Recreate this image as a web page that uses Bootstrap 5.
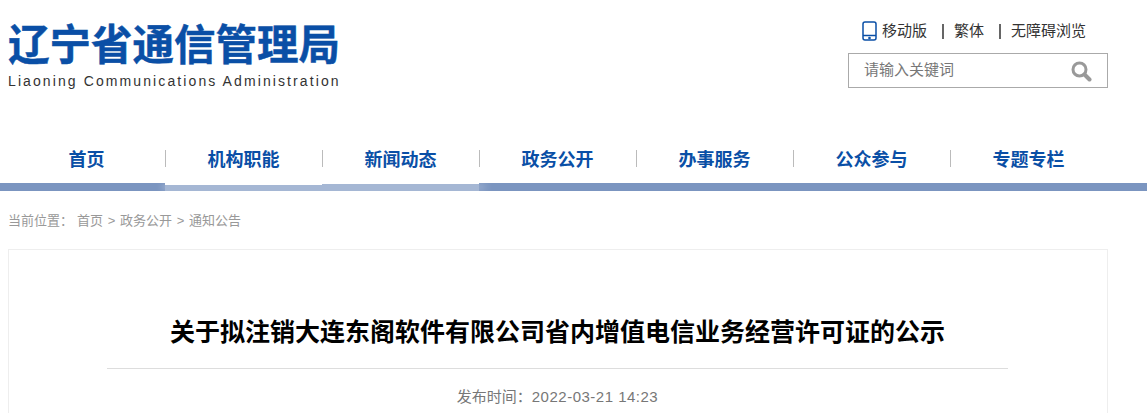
<!DOCTYPE html>
<html lang="zh-CN">
<head>
    <meta charset="UTF-8">
    <title>辽宁省通信管理局</title>
    <link href="https://cdn.jsdelivr.net/npm/bootstrap@5.3.0/dist/css/bootstrap.min.css" rel="stylesheet">
    <style>
        body {
            font-family: "Liberation Sans", "Noto Sans CJK SC", sans-serif;
            background: #fff;
            height: 414px;
            overflow: hidden;
        }
        .site-wrap { width: 1100px; margin-left: 8px; }
        .site-head { height: 130px; padding-top: 21px; }
        .logo-cn {
            font-size: 41.5px;
            line-height: 50px;
            font-weight: 700;
            color: #0a4fa6;
            -webkit-text-stroke: .5px #0a4fa6;
            white-space: nowrap;
        }
        .logo-en {
            font-size: 14px;
            line-height: 18px;
            letter-spacing: 2.1px;
            color: #333;
            margin-top: 1px;
            white-space: nowrap;
        }
        .head-tools { width: 260px; }
        .tool-links { font-size: 15px; line-height: 20px; color: #333; padding-left: 14px; }
        .tool-sep { width: 2px; height: 15px; background: #666; margin: 0 10px 0 15px; }
        .search-box {
            height: 35px;
            border: 1px solid #aaa;
            margin-top: 12px;
            padding: 0 15px;
            font-size: 15px;
            color: #777;
        }
        .nav-strip { border-bottom: 8px solid #7b95c0; height: 61px; }
        .nav-cell {
            width: 157px;
            height: 53px;
            font-size: 18px;
            font-weight: 700;
            color: #0a4fa6;
            line-height: 60px;
            text-align: center;
            position: relative;
        }
        .nav-cell + .nav-cell::before {
            content: "";
            position: absolute;
            left: 0;
            top: 20px;
            height: 17px;
            border-left: 1px solid #bbb;
        }
        .nav-hover::after {
            content: "";
            position: absolute;
            left: 0;
            right: 0;
            top: 53px;
            height: 8px;
            background: rgba(255, 255, 255, .32);
        }
        .nav-hover-a::after {
            border-top: 2px solid #fff;
            box-shadow: -5px 0 6px -2px rgba(255, 255, 255, .4);
        }
        .nav-hover-b::after {
            border-top: 1px solid #fff;
            box-shadow: 8px 0 8px -2px rgba(255, 255, 255, .45);
        }
        .crumb-row { font-size: 13px; line-height: 18px; color: #999; margin-top: 21px; }
        .crumb-home { margin-left: 4px; }
        .crumb-gt { margin: 0 4.7px; }
        .article-box {
            border: 1px solid #eee;
            border-bottom: 0;
            margin-top: 19px;
            height: 164px;
            padding: 64px 99px 0 98px;
        }
        .article-title {
            font-size: 25px;
            line-height: 36px;
            font-weight: 700;
            color: #000;
            text-align: center;
            white-space: nowrap;
            margin: 0;
            padding-bottom: 18px;
            border-bottom: 1px solid #ddd;
        }
        .article-meta { font-size: 15px; line-height: 20px; color: #777; text-align: center; margin-top: 18px; }
        .meta-date { letter-spacing: .5px; }
    </style>
</head>
<body>
    <div class="site-wrap">
        <div class="site-head d-flex justify-content-between">
            <div>
                <div class="logo-cn">辽宁省通信管理局</div>
                <div class="logo-en">Liaoning Communications Administration</div>
            </div>
            <div class="head-tools">
                <div class="tool-links d-flex align-items-center">
                    <svg class="me-1" width="16" height="20" viewBox="0 0 16 20" fill="none" stroke="#0a4fa6" stroke-width="1.5">
                        <rect x="1" y="1" width="13" height="18" rx="2"></rect>
                        <path d="M1 14.5h13"></path>
                        <circle cx="7.5" cy="17" r=".6"></circle>
                    </svg>
                    <span>移动版</span><i class="tool-sep"></i><span>繁体</span><i class="tool-sep"></i><span>无障碍浏览</span>
                </div>
                <div class="search-box d-flex justify-content-between align-items-center">
                    <span>请输入关键词</span>
                    <svg width="22" height="22" viewBox="0 0 22 22" fill="none" stroke="#999">
                        <circle cx="9.5" cy="9.5" r="6.5" stroke-width="3"></circle>
                        <path d="M14.5 14.5l5 5" stroke-width="4" stroke-linecap="round"></path>
                    </svg>
                </div>
            </div>
        </div>
    </div>
    <div class="nav-strip">
        <div class="d-flex ms-2">
            <div class="nav-cell">首页</div>
            <div class="nav-cell nav-hover nav-hover-a">机构职能</div>
            <div class="nav-cell nav-hover nav-hover-b">新闻动态</div>
            <div class="nav-cell">政务公开</div>
            <div class="nav-cell">办事服务</div>
            <div class="nav-cell">公众参与</div>
            <div class="nav-cell">专题专栏</div>
        </div>
    </div>
    <div class="site-wrap">
        <div class="crumb-row d-flex">
            <span>当前位置：</span><span class="crumb-home">首页</span><span class="crumb-gt">&gt;</span><span>政务公开</span><span class="crumb-gt">&gt;</span><span>通知公告</span>
        </div>
        <div class="article-box">
            <h1 class="article-title">关于拟注销大连东阁软件有限公司省内增值电信业务经营许可证的公示</h1>
            <div class="article-meta">发布时间：<span class="meta-date">2022-03-21 14:23</span></div>
        </div>
    </div>
</body>
</html>
